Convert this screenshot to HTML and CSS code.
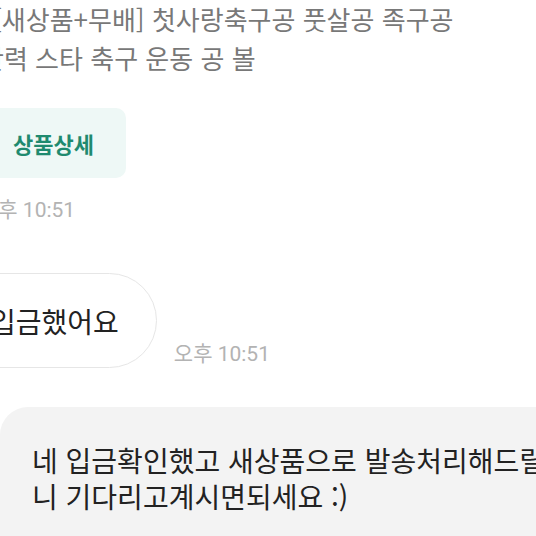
FILE: index.html
```html
<!DOCTYPE html>
<html lang="ko">
<head>
    <meta charset="UTF-8">
    <meta name="viewport" content="width=device-width, initial-scale=1.0">
    <title>채팅</title>
    <link rel="stylesheet" href="styles.css">
</head>
<body>
    <div class="chat">
        <div class="product-title">
            <div class="title-line first">[새상품+무배] 첫사랑축구공 풋살공 족구공</div>
            <div class="title-line second">탄력 스타 축구 운동 공 볼</div>
        </div>
        <div class="detail-btn">상품상세</div>
        <div class="time first-time">오후 10:51</div>

        <div class="row">
            <div class="bubble mine">입금했어요</div>
            <div class="time">오후 10:51</div>
        </div>

        <div class="bubble reply">네 입금확인했고 새상품으로 발송처리해드릴<br>니 기다리고계시면되세요 :)</div>
    </div>
</body>
</html>
```

FILE: styles.css
```css
html, body {
    margin: 0;
    padding: 0;
}
body {
    width: 536px;
    height: 536px;
    overflow: hidden;
    background-color: #fff;
    font-family: "Noto Sans CJK KR", "Noto Sans", sans-serif;
    color: #222;
}
.chat {
    display: flex;
    flex-direction: column;
    align-items: flex-start;
}
.product-title {
    margin-top: -1px;
    color: #787878;
    font-size: 26px;
    line-height: 39px;
    white-space: nowrap;
}
.title-line.first {
    margin-left: -7px;
}
.title-line.second {
    margin-left: -20px;
}
.detail-btn {
    margin-top: 31px;
    margin-left: -20px;
    width: 113px;
    height: 70px;
    padding-left: 33px;
    display: flex;
    align-items: center;
    background-color: #eef8f6;
    border-radius: 10px;
    color: #1f8a6f;
    font-size: 22px;
    font-weight: bold;
}
.time {
    color: #b3b3b3;
    font-family: Roboto, "Noto Sans CJK KR", sans-serif;
    font-size: 21px;
    line-height: 24px;
    white-space: nowrap;
}
.first-time {
    margin-top: 20px;
    margin-left: -21px;
}
.row {
    margin-top: 51px;
    display: flex;
    align-items: flex-end;
    gap: 17px;
}
.row .time {
    margin-bottom: 2px;
}
.bubble {
    font-size: 28px;
    white-space: nowrap;
}
.bubble.mine {
    margin-left: -60px;
    height: 93px;
    padding: 0 37px 0 49px;
    display: flex;
    align-items: center;
    background-color: #fff;
    border: 1px solid #e6e6e6;
    border-radius: 48px;
}
.bubble.reply {
    margin-top: 39px;
    width: 600px;
    height: 200px;
    padding: 35px 0 0 32px;
    line-height: 36px;
    background-color: #f3f3f3;
    border-radius: 28px 0 0 0;
}
```
